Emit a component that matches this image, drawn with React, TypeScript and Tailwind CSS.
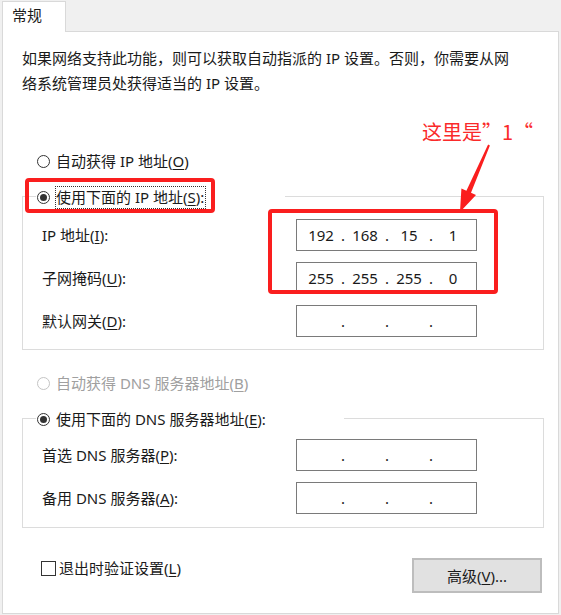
import React, { Fragment } from "react";

function Radio({ checked, disabled }: { checked?: boolean; disabled?: boolean }) {
  return (
    <span
      className={
        disabled
          ? "w-[13px] h-[13px] rounded-full border border-[#c4c4c4] bg-white flex items-center justify-center shrink-0"
          : "w-[13px] h-[13px] rounded-full border border-[#333333] bg-white flex items-center justify-center shrink-0"
      }
    >
      {checked && <span className="w-[7px] h-[7px] rounded-full bg-[#333333]" />}
    </span>
  );
}

function Key({ k }: { k: string }) {
  return <span className="underline underline-offset-[2px] decoration-1">{k}</span>;
}

function IpBox({ values }: { values?: string[] }) {
  return (
    <div className="w-[181px] h-[32px] border border-[#7a7a7a] bg-white flex items-center pl-[3px] shrink-0">
      {[0, 1, 2, 3].map((i) => (
        <Fragment key={i}>
          <span className="w-[42px] text-center leading-[20px]">{values ? values[i] : ""}</span>
          {i < 3 && <span className="w-[2px] flex justify-center leading-[20px]">.</span>}
        </Fragment>
      ))}
    </div>
  );
}

function Row({ label, values }: { label: React.ReactNode; values?: string[] }) {
  return (
    <div className="h-[32px] flex items-center pl-[19px]">
      <span className="w-[254px] leading-[24px]">{label}</span>
      <IpBox values={values} />
    </div>
  );
}

export default function App() {
  return (
    <div className="w-[561px] h-[615px] bg-[#f0f0f0] relative overflow-hidden font-['Noto_Sans','Noto_Sans_CJK_SC',sans-serif] text-[15px] text-[#1a1a1a]">
      {/* tab strip */}
      <div className="h-[31px] flex items-end pl-[2px]">
        <div className="w-[64px] h-[31px] -mb-px relative bg-white border border-b-0 border-[#d9d9d9] pl-[9px] pt-[1px] leading-[24px]">
          常规
        </div>
      </div>

      {/* panel */}
      <div className="mx-[2px] h-[583px] bg-white border border-[#d9d9d9] pl-[19px] flex flex-col">
        <p className="mt-[14px] leading-[25px]">
          如果网络支持此功能，则可以获取自动指派的 IP 设置。否则，你需要从网
          <br />
          络系统管理员处获得适当的 IP 设置。
        </p>

        <div className="mt-[53px] h-[24px] flex items-center pl-[15px] gap-[6px]">
          <Radio />
          <span className="leading-[24px]">
            自动获得 IP 地址(<Key k="O" />)
          </span>
        </div>

        {/* group 1 */}
        <div className="mt-[23px] w-[522px] border border-[#dcdcdc] flex flex-col pb-[12px]">
          <div className="-mt-[12px] ml-[13px] w-[249px] h-[24px] bg-white flex items-center pl-[1px] gap-[5px]">
            <Radio checked />
            <span className="h-[23px] border border-dotted border-[#333333] leading-[21px] pr-[1px]">
              使用下面的 IP 地址(<Key k="S" />):
            </span>
          </div>
          <div className="mt-[10px] flex flex-col gap-[11px]">
            <Row label={<>IP 地址(<Key k="I" />):</>} values={["192", "168", "15", "1"]} />
            <Row label={<>子网掩码(<Key k="U" />):</>} values={["255", "255", "255", "0"]} />
            <Row label={<>默认网关(<Key k="D" />):</>} />
          </div>
        </div>

        <div className="mt-[21px] h-[24px] flex items-center pl-[15px] gap-[6px] text-[#a0a0a0]">
          <Radio disabled />
          <span className="leading-[24px]">
            自动获得 DNS 服务器地址(<Key k="B" />)
          </span>
        </div>

        {/* group 2 */}
        <div className="mt-[23px] w-[522px] border border-[#dcdcdc] flex flex-col pb-[13px]">
          <div className="-mt-[12px] ml-[13px] w-[308px] h-[24px] bg-white flex items-center pl-[1px] gap-[6px]">
            <Radio checked />
            <span className="leading-[24px]">
              使用下面的 DNS 服务器地址(<Key k="E" />):
            </span>
          </div>
          <div className="mt-[8px] flex flex-col gap-[11px]">
            <Row label={<>首选 DNS 服务器(<Key k="P" />):</>} />
            <Row label={<>备用 DNS 服务器(<Key k="A" />):</>} />
          </div>
        </div>

        {/* bottom row */}
        <div className="mt-[30px] w-[520px] flex justify-between items-start">
          <div className="mt-[1px] pl-[19px] h-[18px] flex items-center gap-[3px]">
            <span className="w-[15px] h-[15px] border border-[#333333] bg-white shrink-0" />
            <span className="leading-[18px]">
              退出时验证设置(<Key k="L" />)
            </span>
          </div>
          <button className="w-[130px] h-[35px] bg-[#e1e1e1] border-2 border-[#bdbdbd] flex items-center justify-center leading-[20px]">
            高级(<Key k="V" />)...
          </button>
        </div>
      </div>

      {/* annotations */}
      <div className="absolute left-[25px] top-[178px] w-[190px] h-[35px] border-[4px] border-[#fa1e1e] rounded-[4px]" />
      <div className="absolute left-[268px] top-[209px] w-[230px] h-[85px] border-[4px] border-[#fa1e1e] rounded-[4px]" />
      <div className="absolute left-[422px] top-[122px] text-[20px] leading-[20px] text-[#fa2a2a] font-['Noto_Sans_CJK_SC',sans-serif] whitespace-nowrap">
        这里是”1“
      </div>
      <svg className="absolute left-0 top-0 pointer-events-none" width="561" height="615" viewBox="0 0 561 615">
        <polygon
          points="488.1,144.6 489.9,145.4 471.0,192.8 476.0,195.0 460,212 461.4,188.6 466.4,190.8"
          fill="#fa1e1e"
        />
      </svg>
    </div>
  );
}
